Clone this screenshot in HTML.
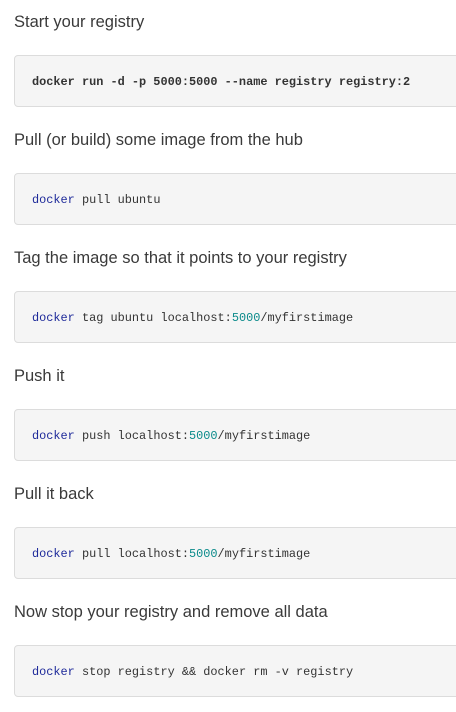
<!DOCTYPE html>
<html><head><meta charset="utf-8"><style>
html,body{margin:0;padding:0;background:#fff;width:456px;height:712px;overflow:hidden;position:relative}
.h{position:absolute;left:14px;font-family:"Liberation Sans",sans-serif;font-size:16.5px;color:#3a3a3a;line-height:20px;white-space:nowrap}
.b{position:absolute;left:14px;width:460px;height:52px;background:#f5f5f5;border:1px solid #dcdcdc;border-radius:4px;box-sizing:border-box}
.c{position:absolute;left:32px;font-family:"Liberation Mono",monospace;font-size:11.9px;color:#333;line-height:14px;white-space:pre}
.k{color:#1e2a9a}.n{color:#0a8a8a}
</style></head><body>
<div class="h" style="top:12px">Start your registry</div>
<div class="b" style="top:55px"></div>
<div class="c" style="top:75px;font-weight:bold;color:#333">docker run -d -p 5000:5000 --name registry registry:2</div>

<div class="h" style="top:130px">Pull (or build) some image from the hub</div>
<div class="b" style="top:173px"></div>
<div class="c" style="top:193px"><span class="k">docker</span> pull ubuntu</div>

<div class="h" style="top:248px">Tag the image so that it points to your registry</div>
<div class="b" style="top:291px"></div>
<div class="c" style="top:311px"><span class="k">docker</span> tag ubuntu localhost:<span class="n">5000</span>/myfirstimage</div>

<div class="h" style="top:366px">Push it</div>
<div class="b" style="top:409px"></div>
<div class="c" style="top:429px"><span class="k">docker</span> push localhost:<span class="n">5000</span>/myfirstimage</div>

<div class="h" style="top:484px">Pull it back</div>
<div class="b" style="top:527px"></div>
<div class="c" style="top:547px"><span class="k">docker</span> pull localhost:<span class="n">5000</span>/myfirstimage</div>

<div class="h" style="top:602px">Now stop your registry and remove all data</div>
<div class="b" style="top:645px"></div>
<div class="c" style="top:665px"><span class="k">docker</span> stop registry &amp;&amp; docker rm -v registry</div>
</body></html>
